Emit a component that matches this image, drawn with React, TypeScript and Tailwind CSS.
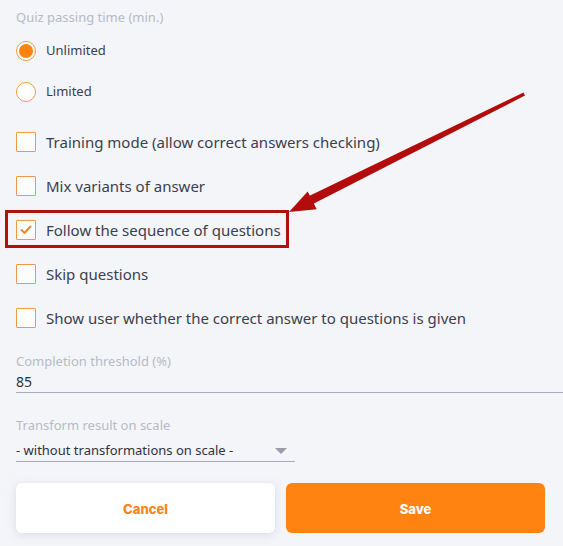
const font = { fontFamily: '"Noto Sans", "Open Sans", sans-serif' };

function Radio({ checked, label }: { checked?: boolean; label: string }) {
  return (
    <div className="flex h-[41px] items-center">
      <div className="flex h-5 w-5 items-center justify-center rounded-full border border-[#f39a44] bg-white">
        {checked && <div className="h-[14px] w-[14px] rounded-full bg-[#ff8311]" />}
      </div>
      <span className="ml-[10px] text-[13px] text-[#3b4050]">{label}</span>
    </div>
  );
}

function Box({ checked, label }: { checked?: boolean; label: string }) {
  return (
    <div className="flex h-[44px] items-center">
      <div className="flex h-5 w-5 items-center justify-center rounded-[1px] border border-[#f0994a] bg-[#fffdf9]">
        {checked && (
          <svg width="12" height="10" viewBox="0 0 12 10">
            <path d="M1.5 5 L4.5 8 L10.5 1.5" fill="none" stroke="#f5862a" strokeWidth="2" strokeLinecap="round" strokeLinejoin="round" />
          </svg>
        )}
      </div>
      <span className="ml-[10px] text-[15px] text-[#3b4050]">{label}</span>
    </div>
  );
}

export default function App() {
  return (
    <div className="relative h-[546px] w-[563px] overflow-hidden bg-[#f4f5f9]" style={font}>
      <div className="flex flex-col pl-4 pr-[18px]">
        <div className="pt-[8px] text-[13px] leading-[18px] text-[#b7bac6]">Quiz passing time (min.)</div>

        <div className="mt-[4px] flex flex-col">
          <Radio checked label="Unlimited" />
          <Radio label="Limited" />
        </div>

        <div className="mt-[8px] flex flex-col">
          <Box label="Training mode (allow correct answers checking)" />
          <Box label="Mix variants of answer" />
          <div className="relative">
            <Box checked label="Follow the sequence of questions" />
            <div className="absolute left-[-11px] top-[2px] h-[38px] w-[284px] border-[3px] border-[#b0100f]" />
          </div>
          <Box label="Skip questions" />
          <Box label="Show user whether the correct answer to questions is given" />
        </div>

        <div className="mt-[12px] text-[13px] leading-[18px] text-[#b7bac6]">Completion threshold (%)</div>
        <div className="mr-[-18px] mt-[1px] flex h-[22px] items-center border-b border-[#a9abb8] text-[14px] text-[#2e3240]">
          85
        </div>

        <div className="mt-[23px] text-[13px] leading-[18px] text-[#b7bac6]">Transform result on scale</div>
        <div className="mt-[6px] flex h-[22px] w-[279px] items-center justify-between border-b border-[#a9abb8] text-[13px] text-[#2e3240]">
          <span>- without transformations on scale -</span>
          <svg width="12" height="6" viewBox="0 0 12 6" className="mr-[8px]">
            <path d="M0 0 L12 0 L6 6 Z" fill="#9a9caa" />
          </svg>
        </div>

        <div className="mt-[21px] grid grid-cols-2 gap-[11px]">
          <button className="h-[50px] rounded-md bg-white pt-[3px] text-[13px] font-extrabold text-[#f5841f] shadow-[0_2px_10px_rgba(170,175,195,0.35)]" style={{ fontFamily: 'Inter, sans-serif' }}>
            Cancel
          </button>
          <button className="h-[50px] rounded-md bg-[#ff8311] pt-[3px] text-[13px] font-extrabold text-white" style={{ fontFamily: 'Inter, sans-serif' }}>
            Save
          </button>
        </div>
      </div>

      {/* annotation arrow */}
      <svg className="pointer-events-none absolute left-0 top-0" width="563" height="546">
        <polygon points="523.5,92.5 525,95.5 311,205 307,197" fill="#b30c0c" />
        <polygon points="289,212 307.7,191.4 316.7,209.2" fill="#b30c0c" />
      </svg>
    </div>
  );
}
